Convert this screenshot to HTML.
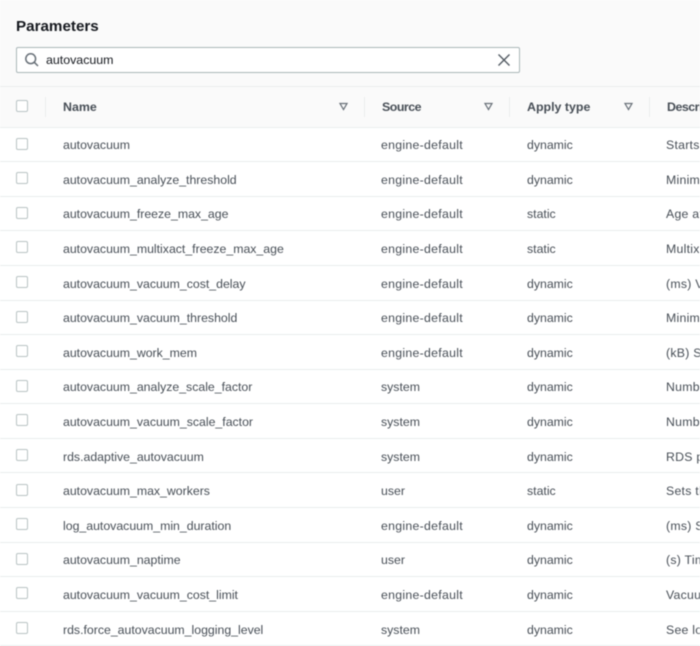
<!DOCTYPE html>
<html><head><meta charset="utf-8">
<style>
html,body{margin:0;padding:0;width:700px;height:646px;overflow:hidden;background:#fff;font-family:"Liberation Sans",sans-serif;color:#545b64}
#w{position:relative;width:700px;height:646px;overflow:hidden;filter:blur(.4px)}
.a{position:absolute}
.t{position:absolute;font-size:12.3px;line-height:16px;white-space:nowrap;color:#474e56}
.e{letter-spacing:.29px}
.d{letter-spacing:.25px}
.h{position:absolute;font-size:12.4px;line-height:16px;font-weight:bold;white-space:nowrap;color:#474e56;top:99px}
.cb{position:absolute;left:16px;width:10px;height:10px;border:1px solid #b9c3c4;border-radius:2px;background:#fff}
.l{position:absolute;left:0;width:700px;height:1px;background:#eaeded}
.s{position:absolute;top:97px;width:1px;height:20px;background:#eaeded}
.tri{position:absolute;top:102px}
</style></head><body><div id="w">
<div class="a" style="left:0;top:0;width:700px;height:127px;background:#fafafa"></div>
<div class="a" style="left:16px;top:18px;font-size:15.2px;line-height:18px;font-weight:bold;color:#16191f">Parameters</div>
<div class="a" style="left:16px;top:47px;width:502px;height:24px;background:#fff;border:1px solid #aab7b8;border-radius:2px"></div>
<svg class="a" style="left:24px;top:52px" width="16" height="16" viewBox="0 0 16 16" fill="none" stroke="#687078" stroke-width="1.5"><circle cx="6.7" cy="6.7" r="4.9"/><path d="M10.2 10.2L14 14"/></svg>
<div class="a" style="left:46px;top:52px;font-size:12.4px;line-height:16px;color:#16191f">autovacuum</div>
<svg class="a" style="left:497px;top:53px" width="14" height="14" viewBox="0 0 14 14" fill="none" stroke="#545b64" stroke-width="1.4"><path d="M1.5 1.5L12.5 12.5M12.5 1.5L1.5 12.5"/></svg>
<div class="l" style="top:86px"></div>
<div class="l" style="top:127px"></div>
<div class="cb" style="top:100px"></div>
<div class="s" style="left:45px"></div>
<div class="s" style="left:364px"></div>
<div class="s" style="left:509px"></div>
<div class="s" style="left:649px"></div>
<div class="h" style="left:63px">Name</div>
<div class="h" style="left:382px;letter-spacing:-.5px">Source</div>
<div class="h" style="left:527px">Apply type</div>
<div class="h" style="left:667px;letter-spacing:-.5px">Description</div>
<svg class="tri" style="left:339px" width="9" height="9" viewBox="0 0 9 9" fill="none" stroke="#687078" stroke-width="1.2"><path d="M1 1.5H8L4.5 7.5Z"/></svg>
<svg class="tri" style="left:484px" width="9" height="9" viewBox="0 0 9 9" fill="none" stroke="#687078" stroke-width="1.2"><path d="M1 1.5H8L4.5 7.5Z"/></svg>
<svg class="tri" style="left:624px" width="9" height="9" viewBox="0 0 9 9" fill="none" stroke="#687078" stroke-width="1.2"><path d="M1 1.5H8L4.5 7.5Z"/></svg>

<div class="cb" style="top:138px"></div><div class="t" style="left:63px;top:137px">autovacuum</div><div class="t e" style="left:381px;top:137px">engine-default</div><div class="t" style="left:527px;top:137px">dynamic</div><div class="t d" style="left:666px;top:137px">Starts the</div><div class="l" style="top:161px"></div>
<div class="cb" style="top:172px"></div><div class="t" style="left:63px;top:172px">autovacuum_analyze_threshold</div><div class="t e" style="left:381px;top:172px">engine-default</div><div class="t" style="left:527px;top:172px">dynamic</div><div class="t d" style="left:666px;top:172px">Minimum</div><div class="l" style="top:196px"></div>
<div class="cb" style="top:207px"></div><div class="t" style="left:63px;top:206px">autovacuum_freeze_max_age</div><div class="t e" style="left:381px;top:206px">engine-default</div><div class="t" style="left:527px;top:206px">static</div><div class="t d" style="left:666px;top:206px">Age at which</div><div class="l" style="top:230px"></div>
<div class="cb" style="top:241px"></div><div class="t" style="left:63px;top:241px">autovacuum_multixact_freeze_max_age</div><div class="t e" style="left:381px;top:241px">engine-default</div><div class="t" style="left:527px;top:241px">static</div><div class="t d" style="left:666px;top:241px">Multixact</div><div class="l" style="top:265px"></div>
<div class="cb" style="top:276px"></div><div class="t" style="left:63px;top:276px">autovacuum_vacuum_cost_delay</div><div class="t e" style="left:381px;top:276px">engine-default</div><div class="t" style="left:527px;top:276px">dynamic</div><div class="t d" style="left:666px;top:276px">(ms) Vacuum</div><div class="l" style="top:300px"></div>
<div class="cb" style="top:311px"></div><div class="t" style="left:63px;top:310px">autovacuum_vacuum_threshold</div><div class="t e" style="left:381px;top:310px">engine-default</div><div class="t" style="left:527px;top:310px">dynamic</div><div class="t d" style="left:666px;top:310px">Minimum</div><div class="l" style="top:334px"></div>
<div class="cb" style="top:345px"></div><div class="t" style="left:63px;top:345px">autovacuum_work_mem</div><div class="t e" style="left:381px;top:345px">engine-default</div><div class="t" style="left:527px;top:345px">dynamic</div><div class="t d" style="left:666px;top:345px">(kB) Sets</div><div class="l" style="top:369px"></div>
<div class="cb" style="top:380px"></div><div class="t" style="left:63px;top:379px">autovacuum_analyze_scale_factor</div><div class="t" style="left:381px;top:379px">system</div><div class="t" style="left:527px;top:379px">dynamic</div><div class="t d" style="left:666px;top:379px">Number</div><div class="l" style="top:403px"></div>
<div class="cb" style="top:414px"></div><div class="t" style="left:63px;top:414px">autovacuum_vacuum_scale_factor</div><div class="t" style="left:381px;top:414px">system</div><div class="t" style="left:527px;top:414px">dynamic</div><div class="t d" style="left:666px;top:414px">Number</div><div class="l" style="top:438px"></div>
<div class="cb" style="top:449px"></div><div class="t" style="left:63px;top:449px">rds.adaptive_autovacuum</div><div class="t" style="left:381px;top:449px">system</div><div class="t" style="left:527px;top:449px">dynamic</div><div class="t d" style="left:666px;top:449px">RDS para</div><div class="l" style="top:472px"></div>
<div class="cb" style="top:484px"></div><div class="t" style="left:63px;top:483px">autovacuum_max_workers</div><div class="t" style="left:381px;top:483px">user</div><div class="t" style="left:527px;top:483px">static</div><div class="t d" style="left:666px;top:483px">Sets the</div><div class="l" style="top:507px"></div>
<div class="cb" style="top:518px"></div><div class="t" style="left:63px;top:518px">log_autovacuum_min_duration</div><div class="t e" style="left:381px;top:518px">engine-default</div><div class="t" style="left:527px;top:518px">dynamic</div><div class="t d" style="left:666px;top:518px">(ms) Sets</div><div class="l" style="top:542px"></div>
<div class="cb" style="top:553px"></div><div class="t" style="left:63px;top:552px">autovacuum_naptime</div><div class="t" style="left:381px;top:552px">user</div><div class="t" style="left:527px;top:552px">dynamic</div><div class="t d" style="left:666px;top:552px">(s) Time</div><div class="l" style="top:576px"></div>
<div class="cb" style="top:587px"></div><div class="t" style="left:63px;top:587px">autovacuum_vacuum_cost_limit</div><div class="t e" style="left:381px;top:587px">engine-default</div><div class="t" style="left:527px;top:587px">dynamic</div><div class="t d" style="left:666px;top:587px">Vacuum</div><div class="l" style="top:611px"></div>
<div class="cb" style="top:622px"></div><div class="t" style="left:63px;top:622px">rds.force_autovacuum_logging_level</div><div class="t" style="left:381px;top:622px">system</div><div class="t" style="left:527px;top:622px">dynamic</div><div class="t d" style="left:666px;top:622px">See log</div><div class="l" style="top:645px"></div>
</div></body></html>
